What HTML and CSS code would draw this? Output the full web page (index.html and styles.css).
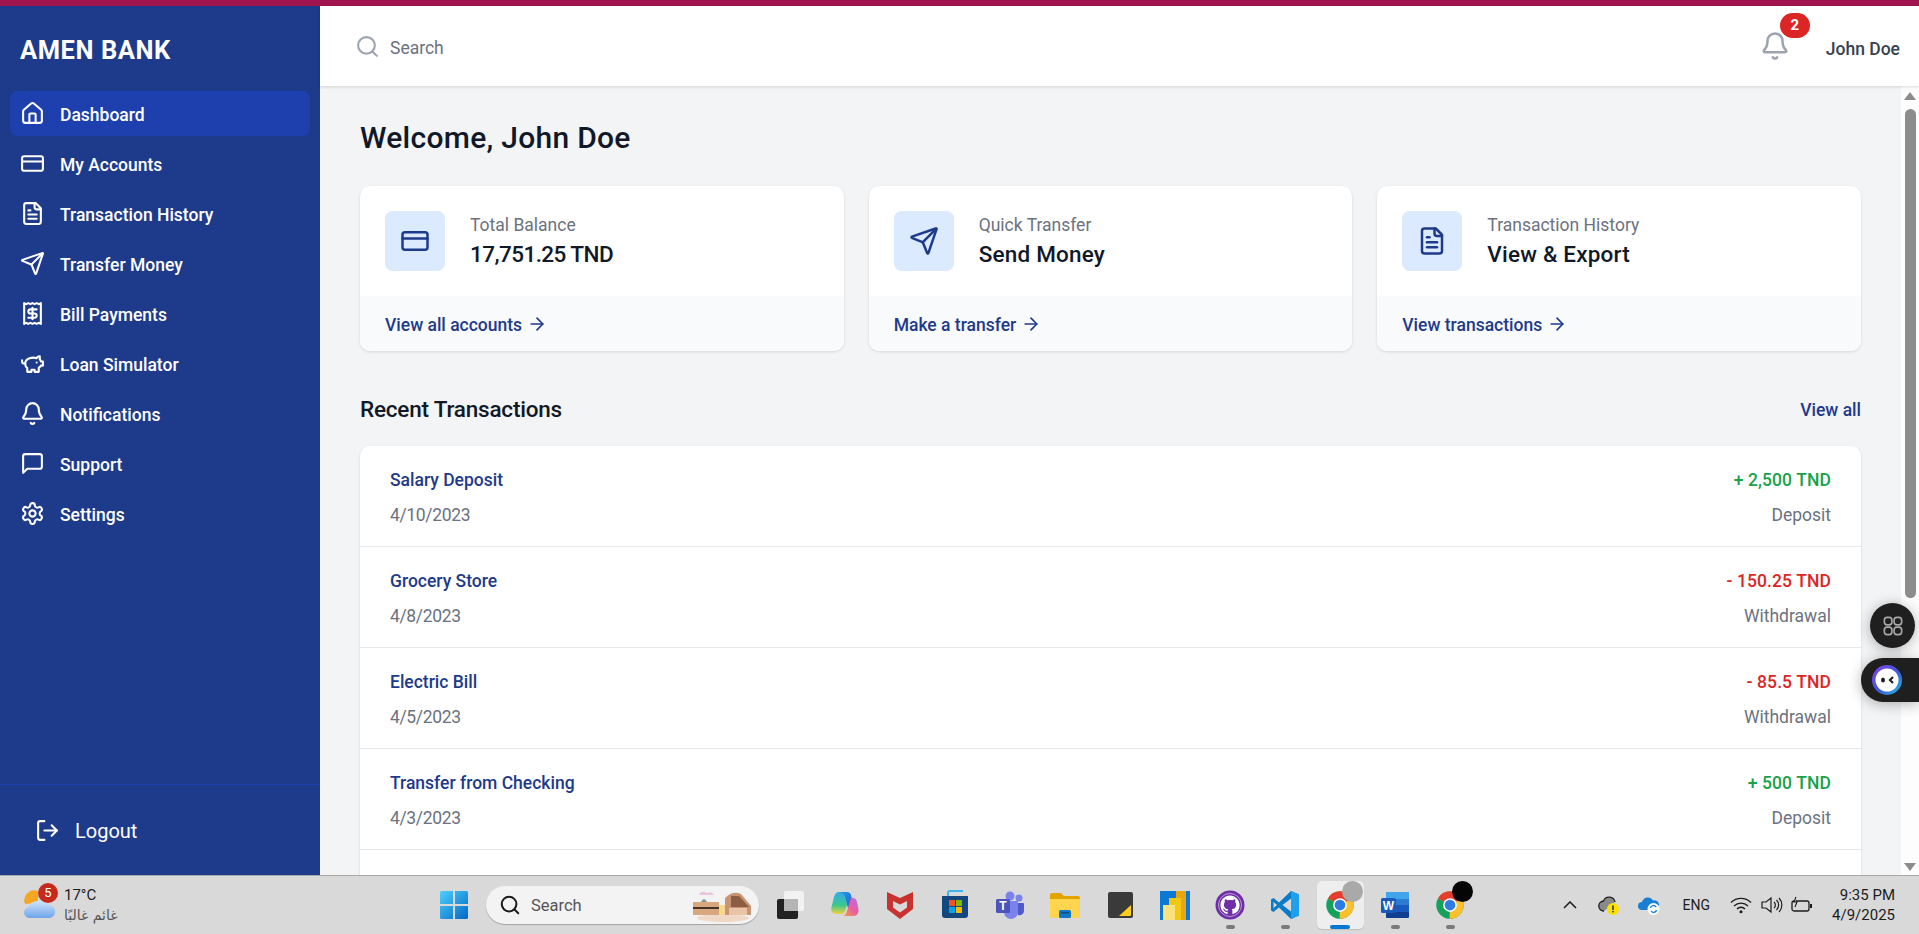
FILE: index.html
```html
<!doctype html>
<html>
<head>
<meta charset="utf-8">
<title>AMEN BANK</title>
<link rel="stylesheet" href="styles.css">
</head>
<body>

<svg class="sprite" xmlns="http://www.w3.org/2000/svg">
	<symbol id="i-home" viewBox="0 0 24 24"><path d="M15 21v-8a1 1 0 0 0-1-1h-4a1 1 0 0 0-1 1v8"/><path d="M3 10a2 2 0 0 1 .709-1.528l7-5.999a2 2 0 0 1 2.582 0l7 5.999A2 2 0 0 1 21 10v9a2 2 0 0 1-2 2H5a2 2 0 0 1-2-2z"/></symbol>
	<symbol id="i-card" viewBox="0 0 24 24"><rect x="2" y="5" width="20" height="14" rx="2"/><line x1="2" y1="10" x2="22" y2="10"/></symbol>
	<symbol id="i-file" viewBox="0 0 24 24"><path d="M15 2H6a2 2 0 0 0-2 2v16a2 2 0 0 0 2 2h12a2 2 0 0 0 2-2V7Z"/><path d="M14 2v4a2 2 0 0 0 2 2h4"/><path d="M10 9H8"/><path d="M16 13H8"/><path d="M16 17H8"/></symbol>
	<symbol id="i-send" viewBox="0 0 24 24"><path d="M14.536 21.686a.5.5 0 0 0 .937-.024l6.5-19a.496.496 0 0 0-.635-.635l-19 6.5a.5.5 0 0 0-.024.937l7.93 3.18a2 2 0 0 1 1.112 1.11z"/><path d="m21.854 2.147-10.94 10.939"/></symbol>
	<symbol id="i-receipt" viewBox="0 0 24 24"><path d="M4 2v20l2-1 2 1 2-1 2 1 2-1 2 1 2-1 2 1V2l-2 1-2-1-2 1-2-1-2 1-2-1-2 1Z"/><path d="M16 8h-6a2 2 0 1 0 0 4h4a2 2 0 1 1 0 4H8"/><path d="M12 17.5v-11"/></symbol>
	<symbol id="i-piggy" viewBox="0 0 24 24"><path d="M19 5c-1.5 0-2.8 1.4-3 2-3.5-1.5-11-.3-11 5 0 1.8 0 3 2 4.5V20h4v-2h3v2h4v-4c1-.5 1.7-1 2-2h2v-4h-2c0-1-.5-1.5-1-2V5z"/><path d="M2 9v1c0 1.1.9 2 2 2h1"/><path d="M16 11h.01"/></symbol>
	<symbol id="i-bell" viewBox="0 0 24 24"><path d="M10.268 21a2 2 0 0 0 3.464 0"/><path d="M3.262 15.326A1 1 0 0 0 4 17h16a1 1 0 0 0 .74-1.673C19.41 13.956 18 12.499 18 8A6 6 0 0 0 6 8c0 4.499-1.411 5.956-2.738 7.326"/></symbol>
	<symbol id="i-chat" viewBox="0 0 24 24"><path d="M21 15a2 2 0 0 1-2 2H7l-4 4V5a2 2 0 0 1 2-2h14a2 2 0 0 1 2 2z"/></symbol>
	<symbol id="i-gear" viewBox="0 0 24 24"><path d="M12.22 2h-.44a2 2 0 0 0-2 2v.18a2 2 0 0 1-1 1.73l-.43.25a2 2 0 0 1-2 0l-.15-.08a2 2 0 0 0-2.73.73l-.22.38a2 2 0 0 0 .73 2.73l.15.1a2 2 0 0 1 1 1.72v.51a2 2 0 0 1-1 1.74l-.15.09a2 2 0 0 0-.73 2.73l.22.38a2 2 0 0 0 2.73.73l.15-.08a2 2 0 0 1 2 0l.43.25a2 2 0 0 1 1 1.73V20a2 2 0 0 0 2 2h.44a2 2 0 0 0 2-2v-.18a2 2 0 0 1 1-1.73l.43-.25a2 2 0 0 1 2 0l.15.08a2 2 0 0 0 2.73-.73l.22-.39a2 2 0 0 0-.73-2.73l-.15-.08a2 2 0 0 1-1-1.74v-.5a2 2 0 0 1 1-1.74l.15-.09a2 2 0 0 0 .73-2.73l-.22-.38a2 2 0 0 0-2.73-.73l-.15.08a2 2 0 0 1-2 0l-.43-.25a2 2 0 0 1-1-1.73V4a2 2 0 0 0-2-2z"/><circle cx="12" cy="12" r="3"/></symbol>
	<symbol id="i-logout" viewBox="0 0 24 24"><path d="M9 21H5a2 2 0 0 1-2-2V5a2 2 0 0 1 2-2h4"/><polyline points="16 17 21 12 16 7"/><line x1="21" y1="12" x2="9" y2="12"/></symbol>
	<symbol id="i-arrow" viewBox="0 0 24 24"><path d="M5 12h14"/><path d="m12 5 7 7-7 7"/></symbol>
	<symbol id="i-search" viewBox="0 0 24 24"><circle cx="11" cy="11" r="8"/><path d="m21 21-4.3-4.3"/></symbol>
	<symbol id="t-chrome" viewBox="0 0 48 48">
		<g fill="none" stroke-width="14" transform="rotate(-150 24 24)">
			<circle cx="24" cy="24" r="15" stroke="#16a05d" stroke-dasharray="94.25 94.25"/>
			<circle cx="24" cy="24" r="15" stroke="#fbc02d" stroke-dasharray="62.83 125.66"/>
			<circle cx="24" cy="24" r="15" stroke="#e53d30" stroke-dasharray="31.42 157.08"/>
		</g>
		<circle cx="24" cy="24" r="11" fill="#fff"/>
		<circle cx="24" cy="24" r="8.6" fill="#2f7be6"/>
	</symbol>
</svg>

<div class="topstrip"></div>

<div class="app">
	<aside class="sidebar">
		<div class="logo">AMEN BANK</div>
		<nav class="nav">
			<a class="nav-item active"><svg class="icon"><use href="#i-home"/></svg>Dashboard</a>
			<a class="nav-item"><svg class="icon"><use href="#i-card"/></svg>My Accounts</a>
			<a class="nav-item"><svg class="icon"><use href="#i-file"/></svg>Transaction History</a>
			<a class="nav-item"><svg class="icon"><use href="#i-send"/></svg>Transfer Money</a>
			<a class="nav-item"><svg class="icon"><use href="#i-receipt"/></svg>Bill Payments</a>
			<a class="nav-item"><svg class="icon"><use href="#i-piggy"/></svg>Loan Simulator</a>
			<a class="nav-item"><svg class="icon"><use href="#i-bell"/></svg>Notifications</a>
			<a class="nav-item"><svg class="icon"><use href="#i-chat"/></svg>Support</a>
			<a class="nav-item"><svg class="icon"><use href="#i-gear"/></svg>Settings</a>
		</nav>
		<div class="sidebar-foot">
			<a class="logout"><svg class="icon"><use href="#i-logout"/></svg>Logout</a>
		</div>
	</aside>

	<div class="page">
		<header class="header">
			<div class="search"><svg class="icon"><use href="#i-search"/></svg><span>Search</span></div>
			<div class="user">
				<div class="bell"><svg class="icon"><use href="#i-bell"/></svg><span class="badge">2</span></div>
				<span class="user-name">John Doe</span>
			</div>
		</header>

		<div class="body">
			<main class="main">
				<h1>Welcome, John Doe</h1>

				<section class="cards">
					<div class="card">
						<div class="card-body">
							<div class="card-icon"><svg class="icon"><use href="#i-card"/></svg></div>
							<div>
								<div class="card-label">Total Balance</div>
								<div class="card-value number">17,751.25 TND</div>
							</div>
						</div>
						<a class="card-foot">View all accounts<svg class="icon"><use href="#i-arrow"/></svg></a>
					</div>
					<div class="card">
						<div class="card-body">
							<div class="card-icon"><svg class="icon"><use href="#i-send"/></svg></div>
							<div>
								<div class="card-label">Quick Transfer</div>
								<div class="card-value">Send Money</div>
							</div>
						</div>
						<a class="card-foot">Make a transfer<svg class="icon"><use href="#i-arrow"/></svg></a>
					</div>
					<div class="card">
						<div class="card-body">
							<div class="card-icon"><svg class="icon"><use href="#i-file"/></svg></div>
							<div>
								<div class="card-label">Transaction History</div>
								<div class="card-value">View &amp; Export</div>
							</div>
						</div>
						<a class="card-foot">View transactions<svg class="icon"><use href="#i-arrow"/></svg></a>
					</div>
				</section>

				<div class="section-head">
					<h2>Recent Transactions</h2>
					<a>View all</a>
				</div>

				<section class="list">
					<div class="row">
						<div><div class="row-name">Salary Deposit</div><div class="row-sub date">4/10/2023</div></div>
						<div class="row-end"><div class="amount plus">+ 2,500 TND</div><div class="row-sub">Deposit</div></div>
					</div>
					<div class="row">
						<div><div class="row-name">Grocery Store</div><div class="row-sub date">4/8/2023</div></div>
						<div class="row-end"><div class="amount minus">- 150.25 TND</div><div class="row-sub">Withdrawal</div></div>
					</div>
					<div class="row">
						<div><div class="row-name">Electric Bill</div><div class="row-sub date">4/5/2023</div></div>
						<div class="row-end"><div class="amount minus">- 85.5 TND</div><div class="row-sub">Withdrawal</div></div>
					</div>
					<div class="row">
						<div><div class="row-name">Transfer from Checking</div><div class="row-sub date">4/3/2023</div></div>
						<div class="row-end"><div class="amount plus">+ 500 TND</div><div class="row-sub">Deposit</div></div>
					</div>
					<div class="row row-empty"></div>
				</section>
			</main>

			<div class="scrollbar">
				<span class="arrow-up"></span>
				<span class="thumb"></span>
				<span class="arrow-down"></span>
			</div>
		</div>
	</div>
</div>

<div class="float-apps">
	<svg viewBox="0 0 24 24"><rect x="4" y="4" width="7" height="7" rx="2.6"/><rect x="13" y="4" width="7" height="7" rx="2.6"/><rect x="4" y="13" width="7" height="7" rx="2.6"/><rect x="13" y="13" width="7" height="7" rx="2.6"/></svg>
</div>
<div class="float-bot">
	<svg viewBox="0 0 30 30">
		<defs><linearGradient id="g-bot" x1="0" y1="0" x2="1" y2="1"><stop offset="0" stop-color="#8b3fe8"/><stop offset=".55" stop-color="#3b5bdb"/><stop offset="1" stop-color="#22c3dc"/></linearGradient></defs>
		<circle cx="15" cy="15" r="15" fill="url(#g-bot)"/>
		<circle cx="15" cy="15" r="11.500" fill="#fff"/>
		<ellipse cx="11" cy="15" rx="2" ry="2.500" fill="#1f1f1f"/>
		<path d="M21 12 18 15l3 3" fill="none" stroke="#1f1f1f" stroke-width="2.200"/>
	</svg>
</div>

<footer class="taskbar">
	<div class="weather">
		<div class="weather-icon">
			<svg viewBox="0 0 32 32">
				<defs><linearGradient id="g-cloud" x1="0" y1="0" x2="0" y2="1"><stop offset="0" stop-color="#cfe3fb"/><stop offset="1" stop-color="#6ea5ea"/></linearGradient></defs>
				<path d="M14 2a10 10 0 0 0-13 13l13-1z" fill="#f5a623"/>
				<path d="M6 29a5.500 5.500 0 0 1-1-11 9.500 7 0 0 1 18-2 6.500 6.500 0 0 1 3 13z" fill="url(#g-cloud)"/>
			</svg>
			<span class="weather-badge">5</span>
		</div>
		<div>
			<div class="weather-temp">17°C</div>
			<div class="weather-text" dir="rtl">غائم غالبًا</div>
		</div>
	</div>

	<div class="tasks">
		<span class="task">
			<svg viewBox="0 0 30 30">
				<defs><linearGradient id="g-win" x1="0" y1="0" x2="1" y2="1"><stop offset="0" stop-color="#4fd0fb"/><stop offset="1" stop-color="#0067c5"/></linearGradient></defs>
				<path d="M1 2.5A1.5 1.5 0 0 1 2.500 1H14v13H1zM16 1h11.500A1.500 1.500 0 0 1 29 2.500V14H16zM1 16h13v13H2.500A1.500 1.500 0 0 1 1 27.500zM16 16h13v11.500a1.500 1.500 0 0 1-1.500 1.500H16z" fill="url(#g-win)"/>
			</svg>
		</span>

		<div class="task-search">
			<svg class="icon"><use href="#i-search"/></svg>
			<span>Search</span>
			<svg class="search-art" viewBox="0 0 64 34">
				<ellipse cx="32" cy="30" rx="26" ry="4" fill="#efd9c6"/>
				<path d="M8 6q4-4 8-1 5-2 7 2H8z" fill="#e8c4e0"/>
				<rect x="2" y="14" width="26" height="13" fill="#d9a77f"/>
				<rect x="2" y="19" width="26" height="2" fill="#4a3526"/>
				<path d="M10 14q3-6 6 0z" fill="#7ba38f"/>
				<rect x="28" y="17" width="6" height="10" fill="#f7d98a"/>
				<path d="M34 27V10q8-8 16-4l10 12v9z" fill="#c89473"/>
				<path d="M40 8h8l10 11H40z" fill="#8b5e44"/>
				<rect x="38" y="20" width="18" height="7" fill="#eac4a8"/>
			</svg>
		</div>

		<span class="task">
			<svg viewBox="0 0 30 30"><rect x="9" y="1" width="20" height="20" rx="2" fill="#f2f2f2"/><rect x="2" y="9" width="21" height="20" rx="2" fill="#222"/><rect x="9" y="9" width="14" height="12" fill="#b5b5b5"/></svg>
		</span>
		<span class="task">
			<svg viewBox="0 0 30 30">
				<defs>
					<linearGradient id="g-co1" x1="0" y1="0" x2="1" y2="1"><stop offset="0" stop-color="#1c9be8"/><stop offset="1" stop-color="#2f5fd0"/></linearGradient>
					<linearGradient id="g-co2" x1="0" y1="1" x2="1" y2="0"><stop offset="0" stop-color="#f0a53a"/><stop offset=".5" stop-color="#ea5fa0"/><stop offset="1" stop-color="#b66bec"/></linearGradient>
					<linearGradient id="g-co3" x1="0" y1="0" x2="0" y2="1"><stop offset="0" stop-color="#35a8ee"/><stop offset=".6" stop-color="#38c98c"/><stop offset="1" stop-color="#f2d13a"/></linearGradient>
				</defs>
				<path d="M9 2C6 2 5 4 4 7L1.500 17c-1 4 1 7 4.500 7h5c2 0 3.500-1 4-3l2-6-2-7C14 4 12 2 9 2z" fill="url(#g-co3)"/>
				<path d="M9 2h8c2 0 3.500 1 4 3l3.500 13H18l-3-10C14 4 12 3 9 2z" fill="url(#g-co1)"/>
				<path d="M21 8h2c2 0 3.500 1.500 4 4l1.500 7c.5 4-1.500 7-5 7H12c2 0 3.500-1 4.500-3.500z" fill="url(#g-co2)"/>
			</svg>
		</span>
		<span class="task">
			<svg viewBox="0 0 30 30"><path d="M2 2l13 6 13-6v17l-13 10-13-10z" fill="#c8322f"/><path d="M8 11l7 3.500 7-3.500v6.500l-7 5-7-5z" fill="#d9d9d9"/></svg>
		</span>
		<span class="task">
			<svg viewBox="0 0 30 30"><path d="M8 6V3a2 2 0 0 1 2-2h13" fill="none" stroke="#3ab4ea" stroke-width="2"/><path d="M2 6h26v19a3 3 0 0 1-3 3H5a3 3 0 0 1-3-3z" fill="#15477f"/><rect x="9" y="10" width="6" height="6" fill="#f25022"/><rect x="16" y="10" width="6" height="6" fill="#7fba00"/><rect x="9" y="17" width="6" height="6" fill="#00a4ef"/><rect x="16" y="17" width="6" height="6" fill="#ffb900"/></svg>
		</span>
		<span class="task">
			<svg viewBox="0 0 30 30"><circle cx="24" cy="8" r="3.500" fill="#7b83eb"/><path d="M20 13h8a1 1 0 0 1 1 1v7a4.500 4.500 0 0 1-6 4z" fill="#5059c9"/><circle cx="15" cy="6" r="4.500" fill="#7b83eb"/><path d="M9 11h14v11a7 7 0 0 1-14 0z" fill="#7b83eb"/><rect x="1" y="9" width="14" height="14" rx="1.500" fill="#4b53bc"/><text x="8" y="20" class="tile-letter">T</text></svg>
		</span>
		<span class="task">
			<svg viewBox="0 0 30 30"><path d="M0 5a2 2 0 0 1 2-2h9l3 3h14a2 2 0 0 1 2 2v3H0z" fill="#e3a300"/><path d="M0 9h30v18a1 1 0 0 1-1 1H1a1 1 0 0 1-1-1z" fill="#ffd54f"/><rect x="9" y="20" width="12" height="8" rx="1.500" fill="#0f78c8"/><rect x="11" y="22" width="8" height="1.500" fill="#0b4f88"/></svg>
		</span>
		<span class="task">
			<svg viewBox="0 0 30 30"><rect x="3" y="2" width="25" height="26" rx="2" fill="#3a3a3a"/><path d="M26 15v10a1 1 0 0 1-1 1H14z" fill="#ffcf1a"/></svg>
		</span>
		<span class="task">
			<svg viewBox="0 0 30 30"><rect y="1" width="30" height="29" fill="#0a78d4"/><rect x="16" y="1" width="10" height="29" fill="#e8a50c"/><rect x="26" y="1" width="4" height="29" fill="#0a78d4"/><rect x="9" y="8" width="12" height="22" fill="#f2c811"/><rect x="3" y="15" width="12" height="15" fill="#f9e27d"/></svg>
		</span>
		<span class="task running">
			<svg viewBox="0 0 30 30"><circle cx="15" cy="15" r="14.500" fill="#6f2da8"/><circle cx="15" cy="15" r="11.500" fill="none" stroke="#b9a0d6" stroke-width="1"/><g transform="translate(5.400 5.400) scale(1.200)"><path fill="#fff" d="M8 0C3.580 0 0 3.580 0 8c0 3.540 2.290 6.530 5.470 7.590.4.070.55-.17.55-.38 0-.19-.01-.82-.01-1.490-2.010.37-2.530-.49-2.690-.94-.09-.23-.48-.94-.82-1.130-.28-.15-.68-.52-.01-.53.63-.01 1.080.58 1.230.82.72 1.210 1.870.87 2.330.66.07-.52.28-.87.51-1.070-1.780-.2-3.640-.89-3.640-3.950 0-.87.31-1.590.82-2.150-.08-.2-.36-1.020.08-2.120 0 0 .67-.21 2.200.82.64-.18 1.320-.27 2-.27.68 0 1.360.09 2 .27 1.530-1.040 2.200-.82 2.200-.82.44 1.100.16 1.920.08 2.120.51.56.82 1.270.82 2.150 0 3.070-1.870 3.750-3.650 3.950.29.25.54.73.54 1.480 0 1.070-.01 1.930-.01 2.200 0 .21.15.46.55.38A8.013 8.013 0 0016 8c0-4.420-3.580-8-8-8z"/></g></svg>
		</span>
		<span class="task running">
			<svg viewBox="0 0 30 30"><path d="M21 1 9 12.500 3.500 8 1 9.500v11L3.500 22 9 17.500 21 29l8-3.500v-21z" fill="#0a7cc7"/><path d="M21 1l8 3.500v21L21 29z" fill="#1fa0ea"/><path d="M21 8.500 12.500 15l8.500 6.500z" fill="#d9d9d9"/><path d="M3.500 12 7 15l-3.500 3z" fill="#d9d9d9"/></svg>
		</span>
		<span class="task current">
			<svg viewBox="0 0 30 30"><use href="#t-chrome"/></svg>
			<span class="task-avatar"></span>
		</span>
		<span class="task running">
			<svg viewBox="0 0 30 30"><rect x="6" y="2" width="23" height="26" rx="1.500" fill="#2b7cd3"/><rect x="6" y="2" width="23" height="7" fill="#41a5ee"/><rect x="6" y="15" width="23" height="7" fill="#185abd"/><path d="M6 22h23v4.500a1.500 1.500 0 0 1-1.500 1.500H7.500A1.500 1.500 0 0 1 6 26.500z" fill="#103f91"/><rect x="1" y="8" width="15" height="15" rx="1.500" fill="#185abd"/><text x="8.500" y="19.500" class="tile-letter">W</text></svg>
		</span>
		<span class="task running">
			<svg viewBox="0 0 30 30"><use href="#t-chrome"/></svg>
			<span class="task-avatar dark"></span>
		</span>
	</div>

	<div class="tray">
		<svg class="tray-chevron" viewBox="0 0 14 8"><path d="M1 7l6-6 6 6"/></svg>
		<svg class="tray-icon" viewBox="0 0 22 20"><path d="M6 16a5 5 0 0 1-.5-10A6 6 0 0 1 17 7" fill="#8a8a8a" stroke="#222" stroke-width="1.300"/><circle cx="15" cy="14" r="6" fill="#fce100"/><rect x="14.300" y="10.500" width="1.400" height="4.500" fill="#222"/><rect x="14.300" y="16" width="1.400" height="1.400" fill="#222"/></svg>
		<svg class="tray-icon" viewBox="0 0 22 20"><path d="M4 15a4 4 0 0 1 0-8 6 6 0 0 1 11-1.500A4.500 4.500 0 0 1 18 14l-4 1z" fill="#1a7fd4"/><circle cx="15.500" cy="14" r="6" fill="#fff"/><path d="M12.500 13a3 3 0 0 1 5.500-1M18.500 15a3 3 0 0 1-5.500 1" fill="none" stroke="#1a7fd4" stroke-width="1.400"/></svg>
		<span class="tray-lang">ENG</span>
		<svg class="tray-icon tight" viewBox="0 0 22 18"><path d="M1 6.500a14 14 0 0 1 20 0M4 10a10 10 0 0 1 14 0M7 13a5.500 5.500 0 0 1 8 0" fill="none" stroke="#1c1c1c" stroke-width="1.300"/><circle cx="11" cy="15.800" r="1.500" fill="#1c1c1c"/></svg>
		<svg class="tray-icon tight" viewBox="0 0 22 18"><path d="M1 6h4l5-4v14l-5-4H1zM13 6a4 4 0 0 1 0 6M15.500 4a7 7 0 0 1 0 10M18 2a10 10 0 0 1 0 14" fill="none" stroke="#1c1c1c" stroke-width="1.200"/></svg>
		<svg class="tray-icon" viewBox="0 0 22 18"><rect x="1" y="5" width="17" height="10" rx="2" fill="none" stroke="#1c1c1c" stroke-width="1.300"/><rect x="19" y="8" width="2" height="4" fill="#1c1c1c"/><path d="M5 1 3 6h3L4 11" fill="#d9d9d9" stroke="#1c1c1c" stroke-width="1.100"/></svg>
		<div class="clock">
			<div>9:35 PM</div>
			<div>4/9/2025</div>
		</div>
	</div>
</footer>

</body>
</html>
```

FILE: styles.css
```css
* {
	box-sizing: border-box;
}
html, body {
	height: 100%;
}
body {
	margin: 0;
	display: flex;
	flex-direction: column;
	overflow: hidden;
	font-family: Roboto, "Noto Sans", sans-serif;
	font-size: 17.5px;
	line-height: 25px;
	color: #111827;
	background: #f3f4f6;
}
a {
	color: inherit;
	text-decoration: none;
}
h1, h2 {
	margin: 0;
}
.sprite {
	display: none;
}
.icon {
	width: 25px;
	height: 25px;
	flex: none;
	fill: none;
	stroke: currentColor;
	stroke-width: 2;
	stroke-linecap: round;
	stroke-linejoin: round;
}

.topstrip {
	height: 6px;
	flex: none;
	background: #a0144f;
}
.app {
	flex: 1;
	display: flex;
	min-height: 0;
}

/* sidebar */
.sidebar {
	width: 320px;
	flex: none;
	display: flex;
	flex-direction: column;
	background: #1e3a8a;
	color: #fff;
}
.logo {
	height: 85px;
	padding: 27px 20px 0;
	font-size: 25.500px;
	line-height: 35px;
	font-weight: 700;
	letter-spacing: .55px;
}
.nav {
	flex: 1;
	padding: 0 10px;
	display: flex;
	flex-direction: column;
	gap: 5px;
}
.nav-item {
	height: 45px;
	display: flex;
	align-items: center;
	gap: 15px;
	padding: 4px 10px 0;
	border-radius: 7.500px;
	font-weight: 500;
}
.nav-item .icon {
	margin-bottom: 4px;
}
.nav-item.active {
	background: #1e40af;
}
.sidebar-foot {
	height: 91px;
	padding: 20px;
	border-top: 1px solid #1e40af;
}
.logout {
	height: 50px;
	display: flex;
	align-items: center;
	gap: 15px;
	padding: 2px 15px 0;
	font-size: 20px;
}
.logout .icon {
	margin-bottom: 2px;
}

/* header */
.page {
	flex: 1;
	min-width: 0;
	display: flex;
	flex-direction: column;
}
.header {
	height: 80px;
	flex: none;
	display: flex;
	align-items: center;
	justify-content: space-between;
	padding: 0 19px 0 35px;
	background: #fff;
	box-shadow: 0 1px 3px rgba(0, 0, 0, .15);
	position: relative;
}
.search {
	display: flex;
	align-items: center;
	gap: 10px;
	color: #6b7280;
}
.search span {
	padding-top: 4px;
}
.search .icon {
	color: #9ca3af;
}
.user {
	display: flex;
	align-items: center;
	gap: 36px;
}
.user-name {
	padding-top: 6px;
	font-weight: 500;
	color: #374151;
}
.bell {
	position: relative;
	display: flex;
	color: #9ca3af;
}
.bell .icon {
	width: 30px;
	height: 30px;
}
.badge {
	position: absolute;
	top: -18px;
	left: 20px;
	width: 30px;
	height: 25px;
	border-radius: 13px;
	background: #dc2626;
	color: #fff;
	font-size: 15px;
	line-height: 25px;
	font-weight: 700;
	text-align: center;
}

/* main column */
.body {
	flex: 1;
	min-height: 0;
	display: flex;
}
.main {
	flex: 1;
	min-width: 0;
	overflow: hidden;
	padding: 30px 40px 0;
}
h1 {
	height: 40px;
	padding-top: 2px;
	font-size: 30px;
	line-height: 40px;
	font-weight: 500;
	letter-spacing: .28px;
	margin-bottom: 30px;
}
.cards {
	display: grid;
	grid-template-columns: repeat(3, 1fr);
	gap: 25px;
}
.card {
	border-radius: 10px;
	background: #fff;
	overflow: hidden;
	box-shadow: 0 1px 3px rgba(0, 0, 0, .12);
}
.card-body {
	height: 110px;
	padding: 25px;
	display: flex;
	gap: 25px;
}
.card-icon {
	width: 60px;
	height: 60px;
	flex: none;
	display: flex;
	align-items: center;
	justify-content: center;
	border-radius: 7.500px;
	background: #dbeafe;
	color: #1e3a8a;
}
.card-icon .icon {
	width: 30px;
	height: 30px;
}
.card-label {
	color: #6b7280;
	margin-top: 2px;
}
.card-value {
	font-size: 22.500px;
	line-height: 32px;
	font-weight: 500;
	letter-spacing: .2px;
}
.card-value.number {
	letter-spacing: -.55px;
}
.card-foot {
	height: 55px;
	display: flex;
	align-items: center;
	gap: 5px;
	padding: 4px 25px 0;
	background: #f9fafb;
	color: #1e3a8a;
	font-weight: 500;
}
.card-foot .icon {
	width: 20px;
	height: 20px;
	margin-bottom: 4px;
}
.section-head {
	display: flex;
	align-items: center;
	justify-content: space-between;
	margin: 40px 0 20px;
	height: 35px;
	padding-top: 3px;
}
h2 {
	margin-top: -2px;
	font-size: 22.500px;
	line-height: 35px;
	font-weight: 500;
	letter-spacing: -.2px;
}
.section-head a {
	color: #1e3a8a;
	font-weight: 500;
}
.list {
	border-radius: 10px;
	background: #fff;
	box-shadow: 0 1px 3px rgba(0, 0, 0, .12);
}
.row {
	height: 101px;
	padding: 22px 30px 0;
	display: flex;
	justify-content: space-between;
	border-bottom: 1px solid #e5e7eb;
}
.row-empty {
	border-bottom: 0;
}
.row-name {
	color: #1e3a8a;
	font-weight: 500;
}
.row-sub {
	margin-top: 10px;
	color: #6b7280;
}
.row-sub.date {
	letter-spacing: -.35px;
}
.row-end {
	text-align: right;
}
.amount {
	font-weight: 500;
	letter-spacing: .1px;
}
.amount.plus {
	color: #16a34a;
}
.amount.minus {
	color: #dc2626;
}

/* scrollbar is a fixed picture of the browser's own */
.scrollbar {
	width: 18px;
	flex: none;
	display: flex;
	flex-direction: column;
	align-items: center;
	background: #fdfdfd;
	padding: 6px 0 4px;
}
.arrow-up, .arrow-down {
	width: 0;
	height: 0;
	border-left: 6px solid transparent;
	border-right: 6px solid transparent;
}
.arrow-up {
	border-bottom: 8px solid #8c8c8c;
}
.arrow-down {
	border-top: 8px solid #8c8c8c;
	margin-top: auto;
}
.thumb {
	width: 11px;
	height: 489px;
	margin-top: 9px;
	border-radius: 6px;
	background: #8c8c8c;
}

/* floating extension buttons */
.float-apps {
	position: absolute;
	left: 1870px;
	top: 603px;
	width: 45px;
	height: 45px;
	border-radius: 50%;
	background: #1f1f1f;
	display: flex;
	align-items: center;
	justify-content: center;
	box-shadow: 0 2px 14px rgba(0, 0, 0, .3);
}
.float-apps svg {
	width: 26px;
	height: 26px;
	fill: none;
	stroke: #a8a8a8;
	stroke-width: 1.500;
}
.float-bot {
	position: absolute;
	left: 1861px;
	top: 658px;
	width: 58px;
	height: 44px;
	border-radius: 22px 0 0 22px;
	background: #1f1f1f;
	padding: 7px 0 0 11px;
	box-shadow: 0 2px 14px rgba(0, 0, 0, .3);
}
.float-bot svg {
	display: block;
	width: 30px;
	height: 30px;
}

/* windows taskbar */
.taskbar {
	height: 59px;
	flex: none;
	display: flex;
	align-items: center;
	background: #d9d9d9;
	border-top: 1px solid #a8a8a8;
	font-size: 15px;
	line-height: 20px;
	color: #1c1c1c;
	position: relative;
}
.weather {
	width: 426px;
	flex: none;
	display: flex;
	align-items: center;
	gap: 8px;
	padding-left: 24px;
}
.weather-icon {
	position: relative;
	width: 32px;
	height: 32px;
}
.weather-icon svg {
	display: block;
}
.weather-badge {
	position: absolute;
	top: -6px;
	left: 14px;
	width: 20px;
	height: 20px;
	border-radius: 50%;
	background: #c42b1c;
	color: #fff;
	font-size: 13px;
	text-align: center;
}
.weather-text {
	font-family: "DejaVu Sans", sans-serif;
	font-size: 14px;
	color: #555;
	text-align: right;
}
.tasks {
	display: flex;
	align-items: center;
}
.task {
	position: relative;
	width: 55px;
	height: 48px;
	display: flex;
	align-items: center;
	justify-content: center;
}
.task > svg {
	width: 30px;
	height: 30px;
}
.task.running::after, .task.current::after {
	content: "";
	position: absolute;
	bottom: 0;
	left: 50%;
	height: 4px;
	border-radius: 2px;
}
.task.running::after {
	width: 9px;
	margin-left: -4.500px;
	background: #7a7a7a;
}
.task.current {
	background: #eeeeee;
	border-radius: 5px;
	width: 47px;
	margin: 0 4px;
	box-shadow: 0 1px 1px rgba(0, 0, 0, .12);
}
.task.current::after {
	width: 20px;
	margin-left: -10px;
	background: #0078d4;
}
.task-avatar {
	position: absolute;
	top: 0;
	right: 1px;
	width: 21px;
	height: 21px;
	border-radius: 50%;
	background: #a9a9a9;
}
.task-avatar.dark {
	right: 5px;
	background: #050505;
}
.tile-letter {
	fill: #fff;
	font-family: "Liberation Sans", sans-serif;
	font-size: 12px;
	font-weight: 700;
	text-anchor: middle;
}
.task-search {
	width: 273px;
	height: 38px;
	margin: 0 3.500px 0 5px;
	display: flex;
	align-items: center;
	gap: 10px;
	padding: 0 4px 0 13px;
	border-radius: 19px;
	background: #f3f3f3;
	box-shadow: 0 1px 1px rgba(0, 0, 0, .25);
	font-size: 16.500px;
	color: #555;
}
.task-search span {
	padding-top: 2px;
}
.task-search .icon {
	width: 22px;
	height: 22px;
	color: #1c1c1c;
	stroke-width: 2.200;
}
.search-art {
	width: 64px;
	height: 34px;
	margin-left: auto;
}
.tray {
	margin-left: auto;
	display: flex;
	align-items: center;
	padding-right: 24px;
}
.tray-chevron {
	width: 14px;
	height: 8px;
	margin-right: 21px;
	fill: none;
	stroke: #1c1c1c;
	stroke-width: 1.500;
}
.tray-icon {
	width: 22px;
	height: 20px;
	margin-right: 18px;
}
.tray-icon.tight {
	margin-right: 8.500px;
}
.tray-lang {
	margin: 0 20px 0 5px;
	font-size: 14px;
}
.clock {
	margin-left: 1px;
	text-align: right;
}
```
